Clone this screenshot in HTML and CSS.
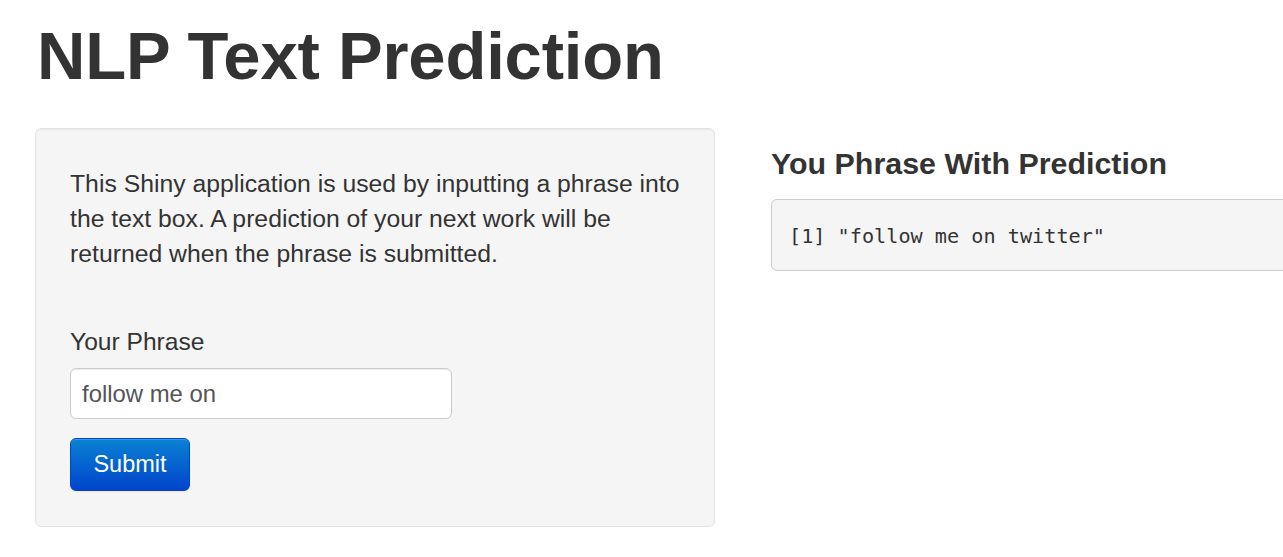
FILE: index.html
```html
<!DOCTYPE html>
<html>
<head>
<meta charset="utf-8">
<title>NLP Text Prediction</title>
<link rel="stylesheet" href="styles.css">
</head>
<body>
<div class="page">
  <h1 class="title">NLP Text Prediction</h1>
  <div class="row">
    <div class="sidebar">
      <p class="intro">This Shiny application is used by inputting a phrase into<br>the text box. A prediction of your next work will be<br>returned when the phrase is submitted.</p>
      <label class="label" for="phrase">Your Phrase</label>
      <input class="input" id="phrase" type="text" value="follow me on">
      <button class="btn" type="button">Submit</button>
    </div>
    <div class="main">
      <h4 class="subtitle">You Phrase With Prediction</h4>
      <pre class="output">[1] "follow me on twitter"</pre>
    </div>
  </div>
</div>
</body>
</html>
```

FILE: styles.css
```css
html, body {
  margin: 0;
  padding: 0;
  background: #ffffff;
  overflow: hidden;
}
body {
  font-family: "Liberation Sans", Arial, sans-serif;
  color: #333333;
}
.page {
  padding: 0 35px;
  width: 2200px;
}
.title {
  margin: 22px 0 0 2px;
  font-size: 67px;
  letter-spacing: -0.2px;
  line-height: 68px;
  font-weight: bold;
  color: #333333;
}
.row {
  display: flex;
  align-items: flex-start;
  gap: 56px;
  margin-top: 38px;
}
.sidebar {
  width: 680px;
  box-sizing: border-box;
  background: #f5f5f5;
  border: 1px solid #e3e3e3;
  border-radius: 6px;
  padding: 37px 34px 35px;
  box-shadow: inset 0 1px 1px rgba(0,0,0,0.05);
  display: flex;
  flex-direction: column;
  align-items: flex-start;
}
.intro {
  margin: 0;
  font-size: 24.75px;
  line-height: 35px;
  white-space: nowrap;
}
.label {
  display: block;
  margin-top: 53px;
  font-size: 24.6px;
  line-height: 35px;
}
.input {
  margin-top: 9px;
  width: 382px;
  height: 51px;
  box-sizing: border-box;
  border: 1px solid #cccccc;
  border-radius: 6px;
  background: #ffffff;
  padding: 0 11px;
  font-family: "Liberation Sans", Arial, sans-serif;
  font-size: 23.9px;
  color: #555555;
  box-shadow: inset 0 1px 1px rgba(0,0,0,0.075);
  outline: none;
}
.btn {
  margin-top: 19px;
  width: 120px;
  height: 53px;
  box-sizing: border-box;
  border: 1px solid #0044cc;
  border-radius: 6px;
  background: linear-gradient(to bottom, #0a82d2, #0044cc);
  color: #ffffff;
  font-family: "Liberation Sans", Arial, sans-serif;
  font-size: 23.5px;
  padding: 0;
  box-shadow: inset 0 1px 0 rgba(255,255,255,0.2), 0 1px 2px rgba(0,0,0,0.05);
}
.main {
  width: 1402px;
}
.subtitle {
  margin: 18px 0 0;
  font-size: 30.4px;
  line-height: 34px;
  font-weight: bold;
  color: #333333;
}
.output {
  margin: 19px 0 0;
  padding: 21px 17px 19px;
  background: #f5f5f5;
  border: 1px solid #cccccc;
  border-radius: 6px;
  font-family: "DejaVu Sans Mono", "Liberation Mono", monospace;
  font-size: 20.2px;
  line-height: 30px;
  color: #333333;
}
```
